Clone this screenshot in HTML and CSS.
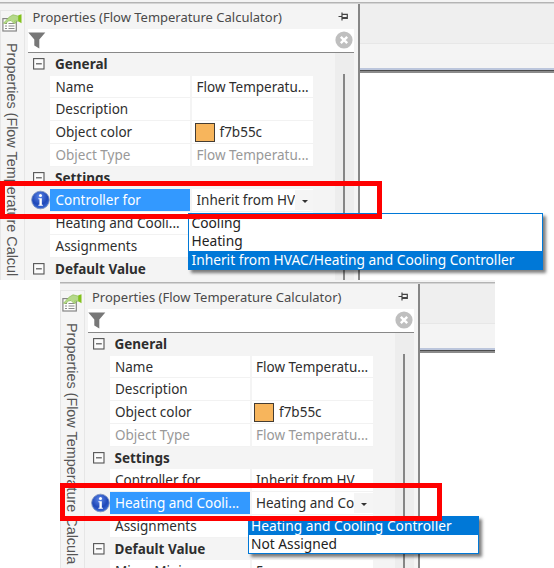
FILE: index.html
```html
<!DOCTYPE html>
<html lang="en">
<head>
  <meta charset="UTF-8" />
  <title>Properties (Flow Temperature Calculator)</title>
  <link rel="stylesheet" href="styles.css">
</head>
<body>
  <!-- Shared icons -->
  <svg class="defs" width="0" height="0">
    <radialGradient id="infoFill" cx="45%" cy="30%" r="75%">
      <stop offset="0" stop-color="#5b86e8"/>
      <stop offset="0.6" stop-color="#2048b8"/>
      <stop offset="1" stop-color="#3f72dc"/>
    </radialGradient>
    <symbol id="tabIcon" viewBox="0 0 20 18">
      <rect x="0.9" y="4.6" width="13.4" height="12.4" fill="#fdfdfd" stroke="#858585" stroke-width="1.2"/>
      <path d="M3 9.5h2M3 12h2M3 14.5h2M6.5 9.5h6M6.5 12h6M6.5 14.5h6" stroke="#8a8a8a" stroke-width="1.1"/>
      <path d="M1.5 9.2L7 3.2L11 0.8L16.5 2.2V7.2L12.5 7L14 9L11.8 9.3L9 6.5L6.5 7L3.5 9.5Z" fill="#b5d98a" stroke="#8cbd55" stroke-width="0.7"/>
      <path d="M16.3 1.2L19.5 0.2V9.2L16.3 7.2Z" fill="#82c11c"/>
    </symbol>
    <symbol id="pin" viewBox="0 0 11 9">
      <path d="M0.5 4.5H4M4 0.5V8.5M4 2.3H9.3V6.4H4M4 5.6H9.3" fill="none" stroke="#444" stroke-width="1.2"/>
    </symbol>
    <symbol id="funnel" viewBox="0 0 18 17">
      <path d="M0.3 0.5H17.3L11.3 7.5V16.5L6.3 13.5V7.5Z" fill="#777"/>
    </symbol>
    <symbol id="clear" viewBox="0 0 18 18">
      <circle cx="9" cy="9" r="8.6" fill="#bfbfbf"/>
      <path d="M5.8 5.8L12.2 12.2M12.2 5.8L5.8 12.2" stroke="#fff" stroke-width="2.4"/>
    </symbol>
    <symbol id="minus" viewBox="0 0 12 12">
      <rect x="0.6" y="0.6" width="10.4" height="10.4" fill="#fbfbfb" stroke="#555" stroke-width="1.1"/>
      <path d="M3 5.8H8.8" stroke="#555" stroke-width="1.2"/>
    </symbol>
    <symbol id="info" viewBox="0 0 20 20">
      <circle cx="10" cy="10" r="9.3" fill="url(#infoFill)" stroke="#7d93c0" stroke-width="0.9"/>
      <circle cx="10" cy="5.2" r="1.6" fill="#fff"/>
      <path d="M7.8 8.2H11.4V15H12.5V16H7.8V15H8.9V9.2H7.8Z" fill="#fff"/>
    </symbol>
  </svg>

  <!-- Controller for -->
  <section class="shot shot-first">
    <aside class="tab">
      <svg class="tab-icon"><use href="#tabIcon"/></svg>
      <span class="tab-title">Properties (Flow Temperature Calcul</span>
    </aside>
    <div class="panel">
      <header class="title"><span class="title-text">Properties (Flow Temperature Calculator)</span><svg class="pin"><use href="#pin"/></svg></header>
      <div class="search"><svg class="funnel"><use href="#funnel"/></svg><svg class="clear"><use href="#clear"/></svg></div>
      <div class="body">
        <div class="grid">
          <div class="row group"><svg class="minus"><use href="#minus"/></svg><b>General</b></div>
          <div class="row"><span class="name">Name</span><span class="value">Flow Temperatu...</span></div>
          <div class="row"><span class="name">Description</span><span class="value"></span></div>
          <div class="row"><span class="name">Object color</span><span class="value"><i class="swatch"></i>f7b55c</span></div>
          <div class="row muted"><span class="name">Object Type</span><span class="value">Flow Temperatu...</span></div>
          <div class="row group"><svg class="minus"><use href="#minus"/></svg><b>Settings</b></div>
          <div class="row selected"><svg class="info"><use href="#info"/></svg><span class="name">Controller for</span><span class="value"><span class="clip">Inherit from HV</span><span class="drop"></span></span></div>
          <div class="row"><span class="name">Heating and Cooli...</span><span class="value"></span></div>
          <div class="row"><span class="name">Assignments</span><span class="value"></span></div>
          <div class="row group"><svg class="minus"><use href="#minus"/></svg><b>Default Value</b></div>
        </div>
        <div class="scroll"><div class="thumb"></div></div>
      </div>
    </div>
    <div class="canvas"><div class="ribbon"></div><div class="ribbon-low"></div></div>
    <ul class="menu menu-controller">
      <li>Cooling</li>
      <li>Heating</li>
      <li class="active">Inherit from HVAC/Heating and Cooling Controller</li>
    </ul>
    <div class="mark mark-controller"></div>
  </section>

  <!-- Heating and Cooling Controller -->
  <section class="shot shot-second">
    <aside class="tab">
      <svg class="tab-icon"><use href="#tabIcon"/></svg>
      <span class="tab-title">Properties (Flow Temperature Calcula</span>
    </aside>
    <div class="panel">
      <header class="title"><span class="title-text">Properties (Flow Temperature Calculator)</span><svg class="pin"><use href="#pin"/></svg></header>
      <div class="search"><svg class="funnel"><use href="#funnel"/></svg><svg class="clear"><use href="#clear"/></svg></div>
      <div class="body">
        <div class="grid">
          <div class="row group"><svg class="minus"><use href="#minus"/></svg><b>General</b></div>
          <div class="row"><span class="name">Name</span><span class="value">Flow Temperatu...</span></div>
          <div class="row"><span class="name">Description</span><span class="value"></span></div>
          <div class="row"><span class="name">Object color</span><span class="value"><i class="swatch"></i>f7b55c</span></div>
          <div class="row muted"><span class="name">Object Type</span><span class="value">Flow Temperatu...</span></div>
          <div class="row group"><svg class="minus"><use href="#minus"/></svg><b>Settings</b></div>
          <div class="row"><span class="name">Controller for</span><span class="value">Inherit from HV...</span></div>
          <div class="row selected"><svg class="info"><use href="#info"/></svg><span class="name">Heating and Cooli...</span><span class="value"><span class="clip">Heating and Co</span><span class="drop"></span></span></div>
          <div class="row"><span class="name">Assignments</span><span class="value"></span></div>
          <div class="row group"><svg class="minus"><use href="#minus"/></svg><b>Default Value</b></div>
          <div class="row"><span class="name">Mixer Minimum</span><span class="value">5</span></div>
        </div>
        <div class="scroll"><div class="thumb"></div></div>
      </div>
    </div>
    <div class="canvas"><div class="ribbon"></div><div class="ribbon-low"></div></div>
    <ul class="menu menu-heating">
      <li class="active">Heating and Cooling Controller</li>
      <li>Not Assigned</li>
    </ul>
    <div class="mark mark-heating"></div>
  </section>
</body>
</html>
```
FILE: styles.css
```css
* {
  box-sizing: border-box;
}
body {
  margin: 0;
  background: #fff;
  color: #2e2e2e;
  font-family: "Noto Sans", sans-serif;
  font-size: 13px;
  line-height: 18px;
  overflow: hidden;
}
.defs {
  position: absolute;
}
svg {
  display: block;
  flex: none;
}
.shot {
  position: relative;
  display: flex;
  height: 280px;
  padding-top: 4px;
  background: linear-gradient(#f4f4f4 2px, #b4b4b4 2px, #b4b4b4 3px, #d4d4d4 3px, #d4d4d4 4px, #f4f4f4 4px);
}
.shot-second {
  width: 435px;
  height: 288px;
  margin-left: 59.5px;
}

/* Side tab */
.tab {
  display: flex;
  flex-direction: column;
  flex: none;
  width: 25px;
  margin-top: 6px;
  border: 1px solid #e6e6e6;
  border-bottom: 0;
  background: #f5f5f5;
  overflow: hidden;
}
.tab-icon {
  width: 20px;
  height: 18px;
  margin: 3px 0 0 1px;
}
.tab-title {
  margin: 11px 2px 0 0;
  writing-mode: vertical-rl;
  white-space: nowrap;
  font-family: "Liberation Sans", Arial, sans-serif;
  font-size: 14.4px;
  line-height: 20px;
  color: #555;
}

/* Property panel */
.panel {
  display: flex;
  flex-direction: column;
  flex: none;
  width: 335px;
  padding: 0 4px 0 3px;
  border-right: 2px solid #868686;
  background: #f4f4f4;
  overflow: hidden;
}
.title {
  display: flex;
  flex: none;
  justify-content: space-between;
  height: 25px;
  padding: 4px 5px 0 4.5px;
  white-space: nowrap;
  color: #4a4a4a;
}
.pin {
  width: 11px;
  height: 9px;
  margin-top: 4px;
}
.search {
  display: flex;
  flex: none;
  justify-content: space-between;
  height: 24px;
  padding: 2px 1px 0 0;
  border-bottom: 1px solid #888;
  background: #fff;
}
.funnel {
  width: 18px;
  height: 17px;
  margin-top: 1px;
}
.clear {
  width: 18px;
  height: 18px;
}
.body {
  display: flex;
  flex: 1;
  min-height: 0;
}
.grid {
  flex: 1;
  font-size: 13.5px;
}
.row {
  display: flex;
  height: 22.74px;
  padding-left: 22px;
  white-space: nowrap;
  line-height: 22px;
}
.name,
.value {
  flex: none;
  border-bottom: 1px solid #f2f2f2;
  background: #fff;
  overflow: hidden;
}
.name {
  width: 140px;
  padding-left: 5.5px;
}
.value {
  display: flex;
  width: 121px;
  margin-left: 2px;
  padding-left: 4.5px;
}
.muted {
  color: #999;
}
.group {
  gap: 10px;
  padding-left: 5px;
}
.minus {
  width: 12px;
  height: 12px;
  margin-top: 5px;
}
.swatch {
  width: 20px;
  height: 19px;
  margin: 2px 5px 0 -2px;
  border: 1px solid #443c32;
  background: #f7b55c;
}
.selected {
  padding-left: 3px;
}
.selected .name {
  background: #3399ff;
  color: #fff;
}
.info {
  width: 19px;
  height: 20px;
  margin-top: 1px;
}
.clip {
  width: 98px;
  overflow: hidden;
}
.drop {
  display: flex;
  align-items: center;
  justify-content: center;
  flex: 1;
  margin: 1px 0;
  padding: 2px 0 0 2px;
  background: #f5f5f5;
}
.drop::before {
  content: "";
  border: 3.5px solid transparent;
  border-top-color: #333;
  border-bottom: 0;
}
.scroll {
  width: 19px;
  padding: 21px 0 0 8px;
  background: #ededed;
}
.thumb {
  width: 2px;
  height: 100%;
  background: #868686;
}

/* Drawing area right of the panel */
.canvas {
  flex: 1;
  background: #fff;
}
.ribbon {
  height: 40px;
  border-bottom: 1px solid #e7e7e7;
  background: #efefef;
}
.ribbon-low {
  height: 29px;
  background: linear-gradient(#f4f4f4 24px, #bcc6dc 24px, #bcc6dc 26px, #4c4c4c 26px, #4c4c4c 27px, #8b8b8b 27px);
}

/* Open drop-down lists */
.menu {
  position: absolute;
  left: 188px;
  margin: 0;
  padding: 0;
  border: 1px solid #0078d7;
  background: #fff;
  box-shadow: 3px 3px 3px rgba(0, 0, 0, 0.5);
  list-style: none;
  white-space: nowrap;
  font-size: 13.75px;
  color: #222;
}
.menu li {
  height: 18.3px;
  padding-left: 2.5px;
  line-height: 18.5px;
}
.menu .active {
  background: #0078d7;
  color: #fff;
}
.menu-controller {
  top: 213px;
  width: 355px;
}
.menu-heating {
  top: 235.5px;
  width: 231px;
}

/* Red highlight frames */
.mark {
  position: absolute;
  left: 0;
  width: 382px;
  height: 38px;
  border: 5px solid #f00;
}
.mark-controller {
  top: 181px;
}
.mark-heating {
  top: 203px;
}
```
